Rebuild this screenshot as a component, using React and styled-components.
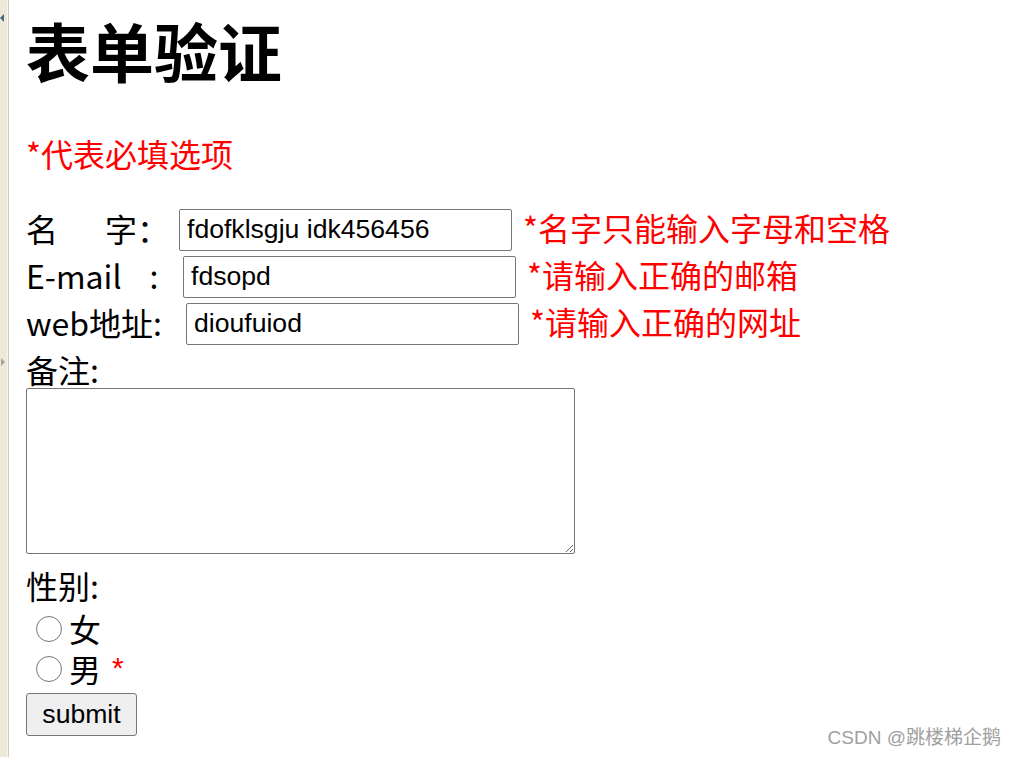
import React from 'react'
import styled, { createGlobalStyle } from 'styled-components'

const GlobalStyle = createGlobalStyle`
  html, body {
    margin: 0;
    padding: 0;
    background: #ffffff;
  }
  body {
    overflow: hidden;
    font-family: "Noto Sans CJK SC", "Microsoft YaHei", sans-serif;
  }
`

const Page = styled.div`
  position: relative;
  display: flex;
  width: 1017px;
  height: 757px;
  overflow: hidden;
`

const Strip = styled.div`
  display: flex;
  flex-direction: column;
  width: 7px;
  flex-shrink: 0;
  background: #ece9d9;
  border-right: 1px solid #f6f5ef;
  box-shadow: 1px 0 0 #cfcdc4;
  margin-right: 2px;
`

const Arrow = styled.svg`
  display: block;
  margin-top: ${(p) => p.$top}px;
`

const Main = styled.div`
  padding-left: 16px;
  padding-top: 7px;
`

const Title = styled.h1`
  margin: 0;
  font-size: 64px;
  line-height: 84px;
  font-weight: 700;
  color: #000;
`

const Note = styled.p`
  margin: 41px 0 32px;
  font-size: 32px;
  line-height: 42px;
  color: #ff0000;
`

const Row = styled.div`
  display: flex;
  align-items: center;
  height: 47px;
  font-size: 32px;
  color: #000;
`

const Label = styled.span`
  display: inline-flex;
  align-items: center;
  width: ${(p) => p.$w}px;
  flex-shrink: 0;
  white-space: pre;
  line-height: 42px;
  padding-bottom: 4px;
`

const Spacer = styled.span`
  display: inline-block;
  width: ${(p) => p.$w}px;
`

const TextInput = styled.input`
  box-sizing: border-box;
  width: 333px;
  height: 42px;
  margin: 0;
  padding: 2px 7px;
  border: 1px solid #767676;
  border-radius: 2px;
  font-family: "Liberation Sans", Arial, sans-serif;
  font-size: 26.6px;
  color: #000;
  background: #fff;
  outline: none;
`

const Hint = styled.span`
  margin-left: 11px;
  padding-bottom: 5px;
  color: #ff0000;
  font-size: 32px;
  line-height: 42px;
  white-space: nowrap;
`

const BlockLabel = styled.div`
  font-size: 32px;
  line-height: ${(p) => p.$lh}px;
  color: #000;
  margin-top: ${(p) => p.$top || 0}px;
`

const Remark = styled.textarea`
  display: block;
  box-sizing: border-box;
  width: 549px;
  height: 166px;
  margin: 0;
  border: 1px solid #767676;
  border-radius: 2px;
  font-family: "Liberation Mono", monospace;
  font-size: 26px;
  outline: none;
`

const RadioGroup = styled.div`
  margin-top: 2px;
`

const RadioRow = styled.label`
  display: flex;
  align-items: center;
  height: 40px;
  font-size: 32px;
  line-height: 40px;
  color: #000;
`

const Radio = styled.input`
  appearance: none;
  box-sizing: border-box;
  width: 26px;
  height: 26px;
  margin: 2px 7px 0 10px;
  border: 1px solid #767676;
  border-radius: 50%;
  background: #fff;
`

const Star = styled.span`
  margin-left: 11px;
  color: #ff0000;
  font-family: "Liberation Sans", Arial, sans-serif;
  font-size: 30px;
`

const SubmitButton = styled.button`
  display: block;
  box-sizing: border-box;
  width: 111px;
  height: 43px;
  margin-top: 5px;
  padding: 0 12px;
  border: 1px solid #767676;
  border-radius: 3px;
  background: #efefef;
  font-family: "Liberation Sans", Arial, sans-serif;
  font-size: 26.6px;
  color: #000;
`

const Watermark = styled.div`
  position: absolute;
  right: 16px;
  bottom: 7px;
  font-family: "Liberation Sans", "Noto Sans CJK SC", sans-serif;
  font-size: 19px;
  line-height: 24px;
  color: #a0a0a0;
  text-shadow: 0 0 1px rgba(255, 255, 255, 0.9);
`

export default function App() {
  return (
    <Page>
      <GlobalStyle />
      <Strip>
        <Arrow $top={14} width='5' height='8' viewBox='0 0 5 8'>
          <path d='M4 0 L0 4 L4 8 Z' fill='#4a6478' />
        </Arrow>
        <Arrow $top={336} width='5' height='8' viewBox='0 0 5 8'>
          <path d='M1 0 L5 4 L1 8 Z' fill='#a8a59a' />
        </Arrow>
      </Strip>
      <Main>
        <Title>表单验证</Title>
        <Note>*代表必填选项</Note>
        <form onSubmit={(e) => e.preventDefault()}>
          <Row>
            <Label $w={153}>名<Spacer $w={47} />字：</Label>
            <TextInput defaultValue='fdofklsgju idk456456' />
            <Hint>*名字只能输入字母和空格</Hint>
          </Row>
          <Row>
            <Label $w={157}>E-mail<Spacer $w={28} />:</Label>
            <TextInput defaultValue='fdsopd' />
            <Hint>*请输入正确的邮箱</Hint>
          </Row>
          <Row>
            <Label $w={160}>web地址:</Label>
            <TextInput defaultValue='dioufuiod' />
            <Hint>*请输入正确的网址</Hint>
          </Row>
          <BlockLabel $top={4} $lh={37}>备注:</BlockLabel>
          <Remark />
          <BlockLabel $top={10} $lh={42}>性别:</BlockLabel>
          <RadioGroup>
            <RadioRow>
              <Radio type='radio' name='sex' value='female' />女
            </RadioRow>
            <RadioRow>
              <Radio type='radio' name='sex' value='male' />男
              <Star>*</Star>
            </RadioRow>
          </RadioGroup>
          <SubmitButton type='submit'>submit</SubmitButton>
        </form>
      </Main>
      <Watermark>CSDN @跳楼梯企鹅</Watermark>
    </Page>
  )
}
